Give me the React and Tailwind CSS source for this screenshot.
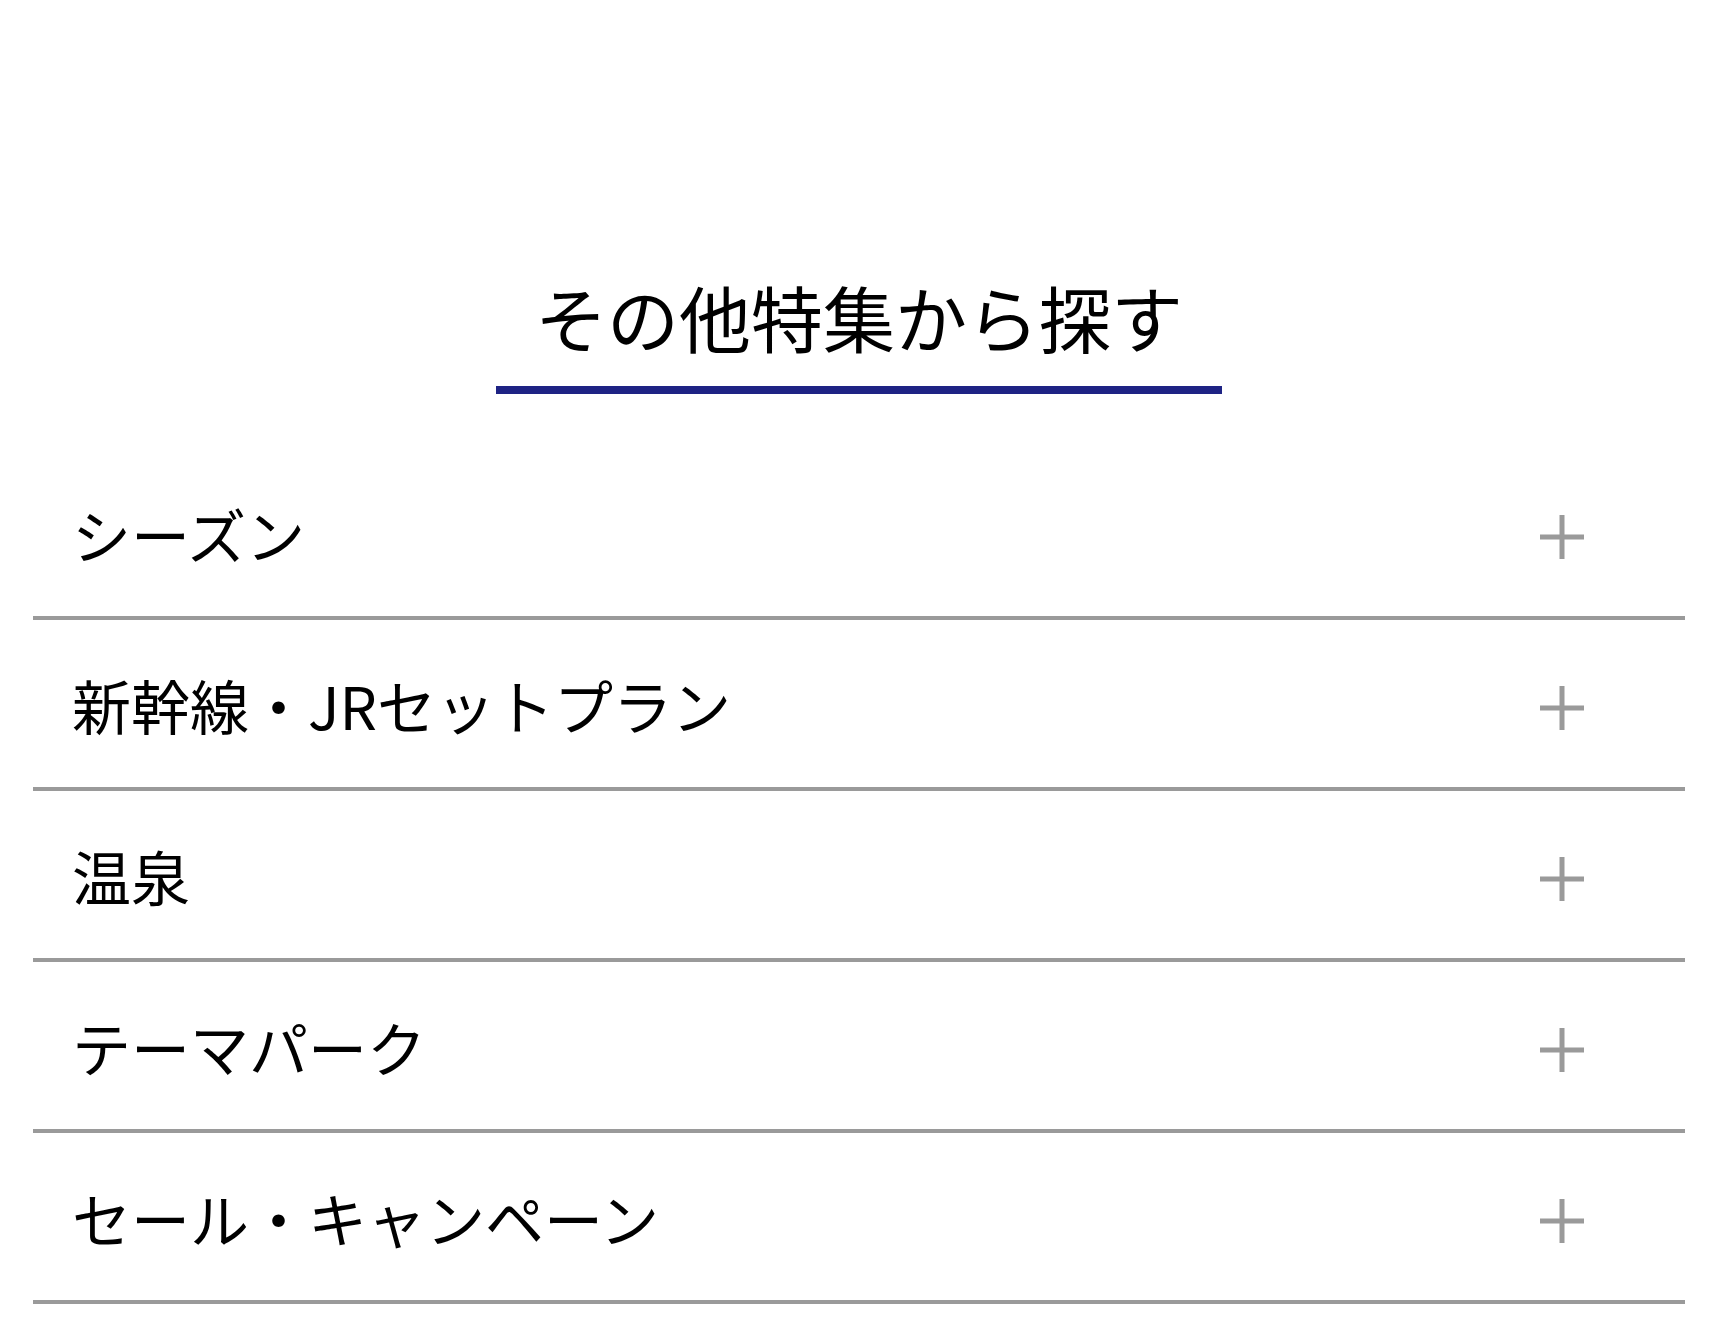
import React from 'react';

const ITEMS = ['シーズン', '新幹線・JRセットプラン', '温泉', 'テーマパーク', 'セール・キャンペーン'];

function PlusIcon() {
  return (
    <svg width="44" height="44" viewBox="0 0 44 44" className="shrink-0">
      <rect x="19.5" y="0" width="5" height="44" fill="#9a9a9a" />
      <rect x="0" y="19.5" width="44" height="5" fill="#9a9a9a" />
    </svg>
  );
}

export default function App() {
  return (
    <div
      className="min-h-screen bg-white px-[33px] text-black"
      style={{ fontFamily: '"Noto Sans CJK JP", "Noto Sans", sans-serif' }}
    >
      {/* 見出し */}
      <div className="flex justify-center pt-[280px]">
        <h2 className="px-[39px] pb-[34px] border-b-8 border-[#1e2384] text-[72px] leading-none font-normal">
          その他特集から探す
        </h2>
      </div>

      {/* リスト */}
      <ul className="mt-[55px]">
        {ITEMS.map((item) => (
          <li
            key={item}
            className="flex h-[171px] items-center justify-between border-b-4 border-[#9a9a9a] pl-[39px] pr-[101px] pt-[9px] cursor-pointer"
          >
            <span className="mb-[8px] text-[59px] leading-none">{item}</span>
            <PlusIcon />
          </li>
        ))}
      </ul>
    </div>
  );
}
